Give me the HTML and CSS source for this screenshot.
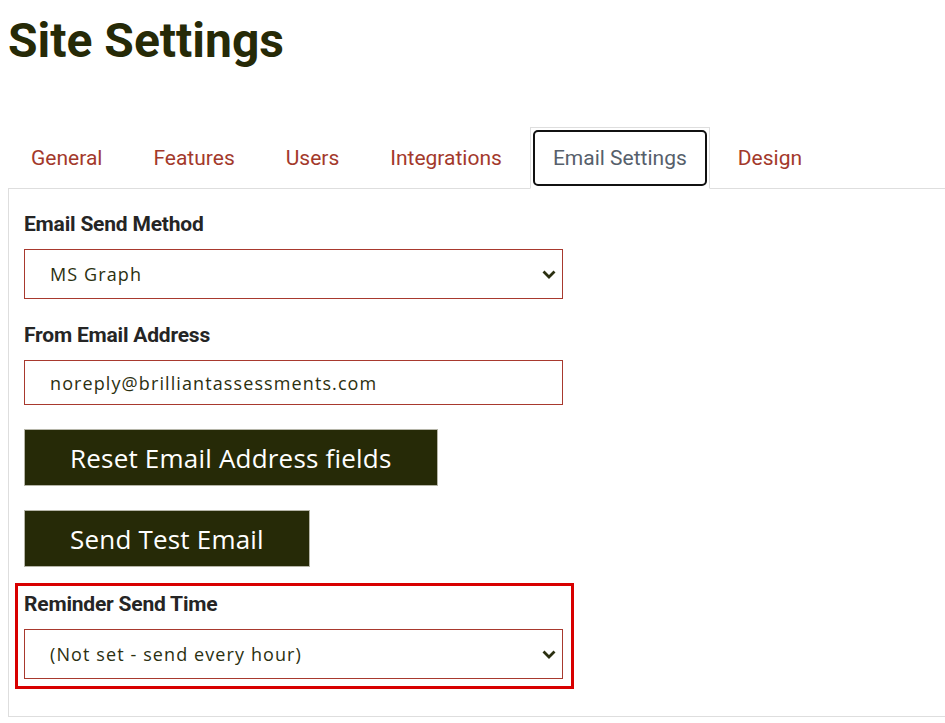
FILE: index.html
```html
<!DOCTYPE html>
<html lang="en">
<head>
    <meta charset="UTF-8">
    <meta name="viewport" content="width=device-width, initial-scale=1.0">
    <title>Site Settings</title>
    <link rel="stylesheet" href="styles.css">
</head>
<body>
    <h1 class="page-title">Site Settings</h1>

    <ul class="tabs">
        <li class="tab"><a href="#">General</a></li>
        <li class="tab"><a href="#">Features</a></li>
        <li class="tab"><a href="#">Users</a></li>
        <li class="tab"><a href="#">Integrations</a></li>
        <li class="tab active"><a href="#">Email Settings</a></li>
        <li class="tab"><a href="#">Design</a></li>
    </ul>

    <div class="tab-panel">
        <div class="form-group">
            <label for="sendMethod">Email Send Method</label>
            <select id="sendMethod" class="field">
                <option>MS Graph</option>
                <option>SMTP</option>
            </select>
        </div>

        <div class="form-group">
            <label for="fromEmail">From Email Address</label>
            <input type="text" id="fromEmail" class="field" value="noreply@brilliantassessments.com">
        </div>

        <div class="form-group">
            <button class="dark-button">Reset Email Address fields</button>
        </div>

        <div class="form-group">
            <button class="dark-button">Send Test Email</button>
        </div>

        <div class="highlight">
            <label for="reminderTime">Reminder Send Time</label>
            <select id="reminderTime" class="field">
                <option>(Not set - send every hour)</option>
            </select>
        </div>
    </div>
</body>
</html>
```

FILE: styles.css
```css
body {
    margin: 0;
    padding: 0 0 0 8px;
    background: #fff;
    font-family: Roboto, "Liberation Sans", sans-serif;
    overflow-x: hidden;
}

.page-title {
    margin: 13px 0 58px;
    font-size: 48px;
    line-height: 56px;
    font-weight: 700;
    color: #262a07;
}

.tabs {
    display: flex;
    gap: 5px;
    margin: 0;
    padding: 0;
    list-style: none;
}

.tab {
    padding: 2px;
    border: 1px solid transparent;
    margin-bottom: -1px;
}

.tab a {
    display: block;
    padding: 0 18px;
    border: 2px solid transparent;
    border-radius: 5px;
    line-height: 52px;
    font-size: 21px;
    color: #a3392b;
    text-decoration: none;
}

.tab.active {
    background: #fff;
    border-color: #dedede #dedede #fff;
}

.tab.active a {
    border-color: #111;
    color: #56606b;
}

.tab-panel {
    border: 1px solid #dedede;
    border-right: none;
    padding: 23px 0 27px 15px;
}

.form-group {
    margin-bottom: 24px;
}

label {
    display: block;
    margin-bottom: 13px;
    font-size: 21px;
    line-height: 24px;
    font-weight: 700;
    letter-spacing: -0.2px;
    color: #252525;
}

.field {
    display: block;
    box-sizing: border-box;
    width: 539px;
    height: 50px;
    padding: 0 40px 0 25px;
    border: 1px solid #a8392e;
    border-radius: 0;
    background: #fff;
    font-family: "Open Sans", sans-serif;
    font-size: 18px;
    letter-spacing: 1.1px;
    color: #2b3010;
    outline: none;
}

input.field {
    height: 45px;
}

select.field {
    appearance: none;
    -webkit-appearance: none;
    background-image: url("data:image/svg+xml;utf8,<svg xmlns='http://www.w3.org/2000/svg' width='14' height='9' viewBox='0 0 14 9'><path d='M1.5 1.5l5.5 5.5 5.5-5.5' fill='none' stroke='%232b3010' stroke-width='2.8'/></svg>");
    background-repeat: no-repeat;
    background-position: right 6px center;
}

.dark-button {
    height: 57px;
    padding: 0 45px;
    border: 1px solid #b5b5a8;
    background: #262a07;
    font-family: "Open Sans", sans-serif;
    font-size: 26px;
    letter-spacing: 0.2px;
    color: #fff;
    cursor: pointer;
}

.form-group:nth-child(4) {
    margin-bottom: 16px;
}

.highlight {
    display: inline-block;
    margin-left: -9px;
    padding: 6px 8px 7px 6px;
    border: 3px solid #d80000;
}
```
